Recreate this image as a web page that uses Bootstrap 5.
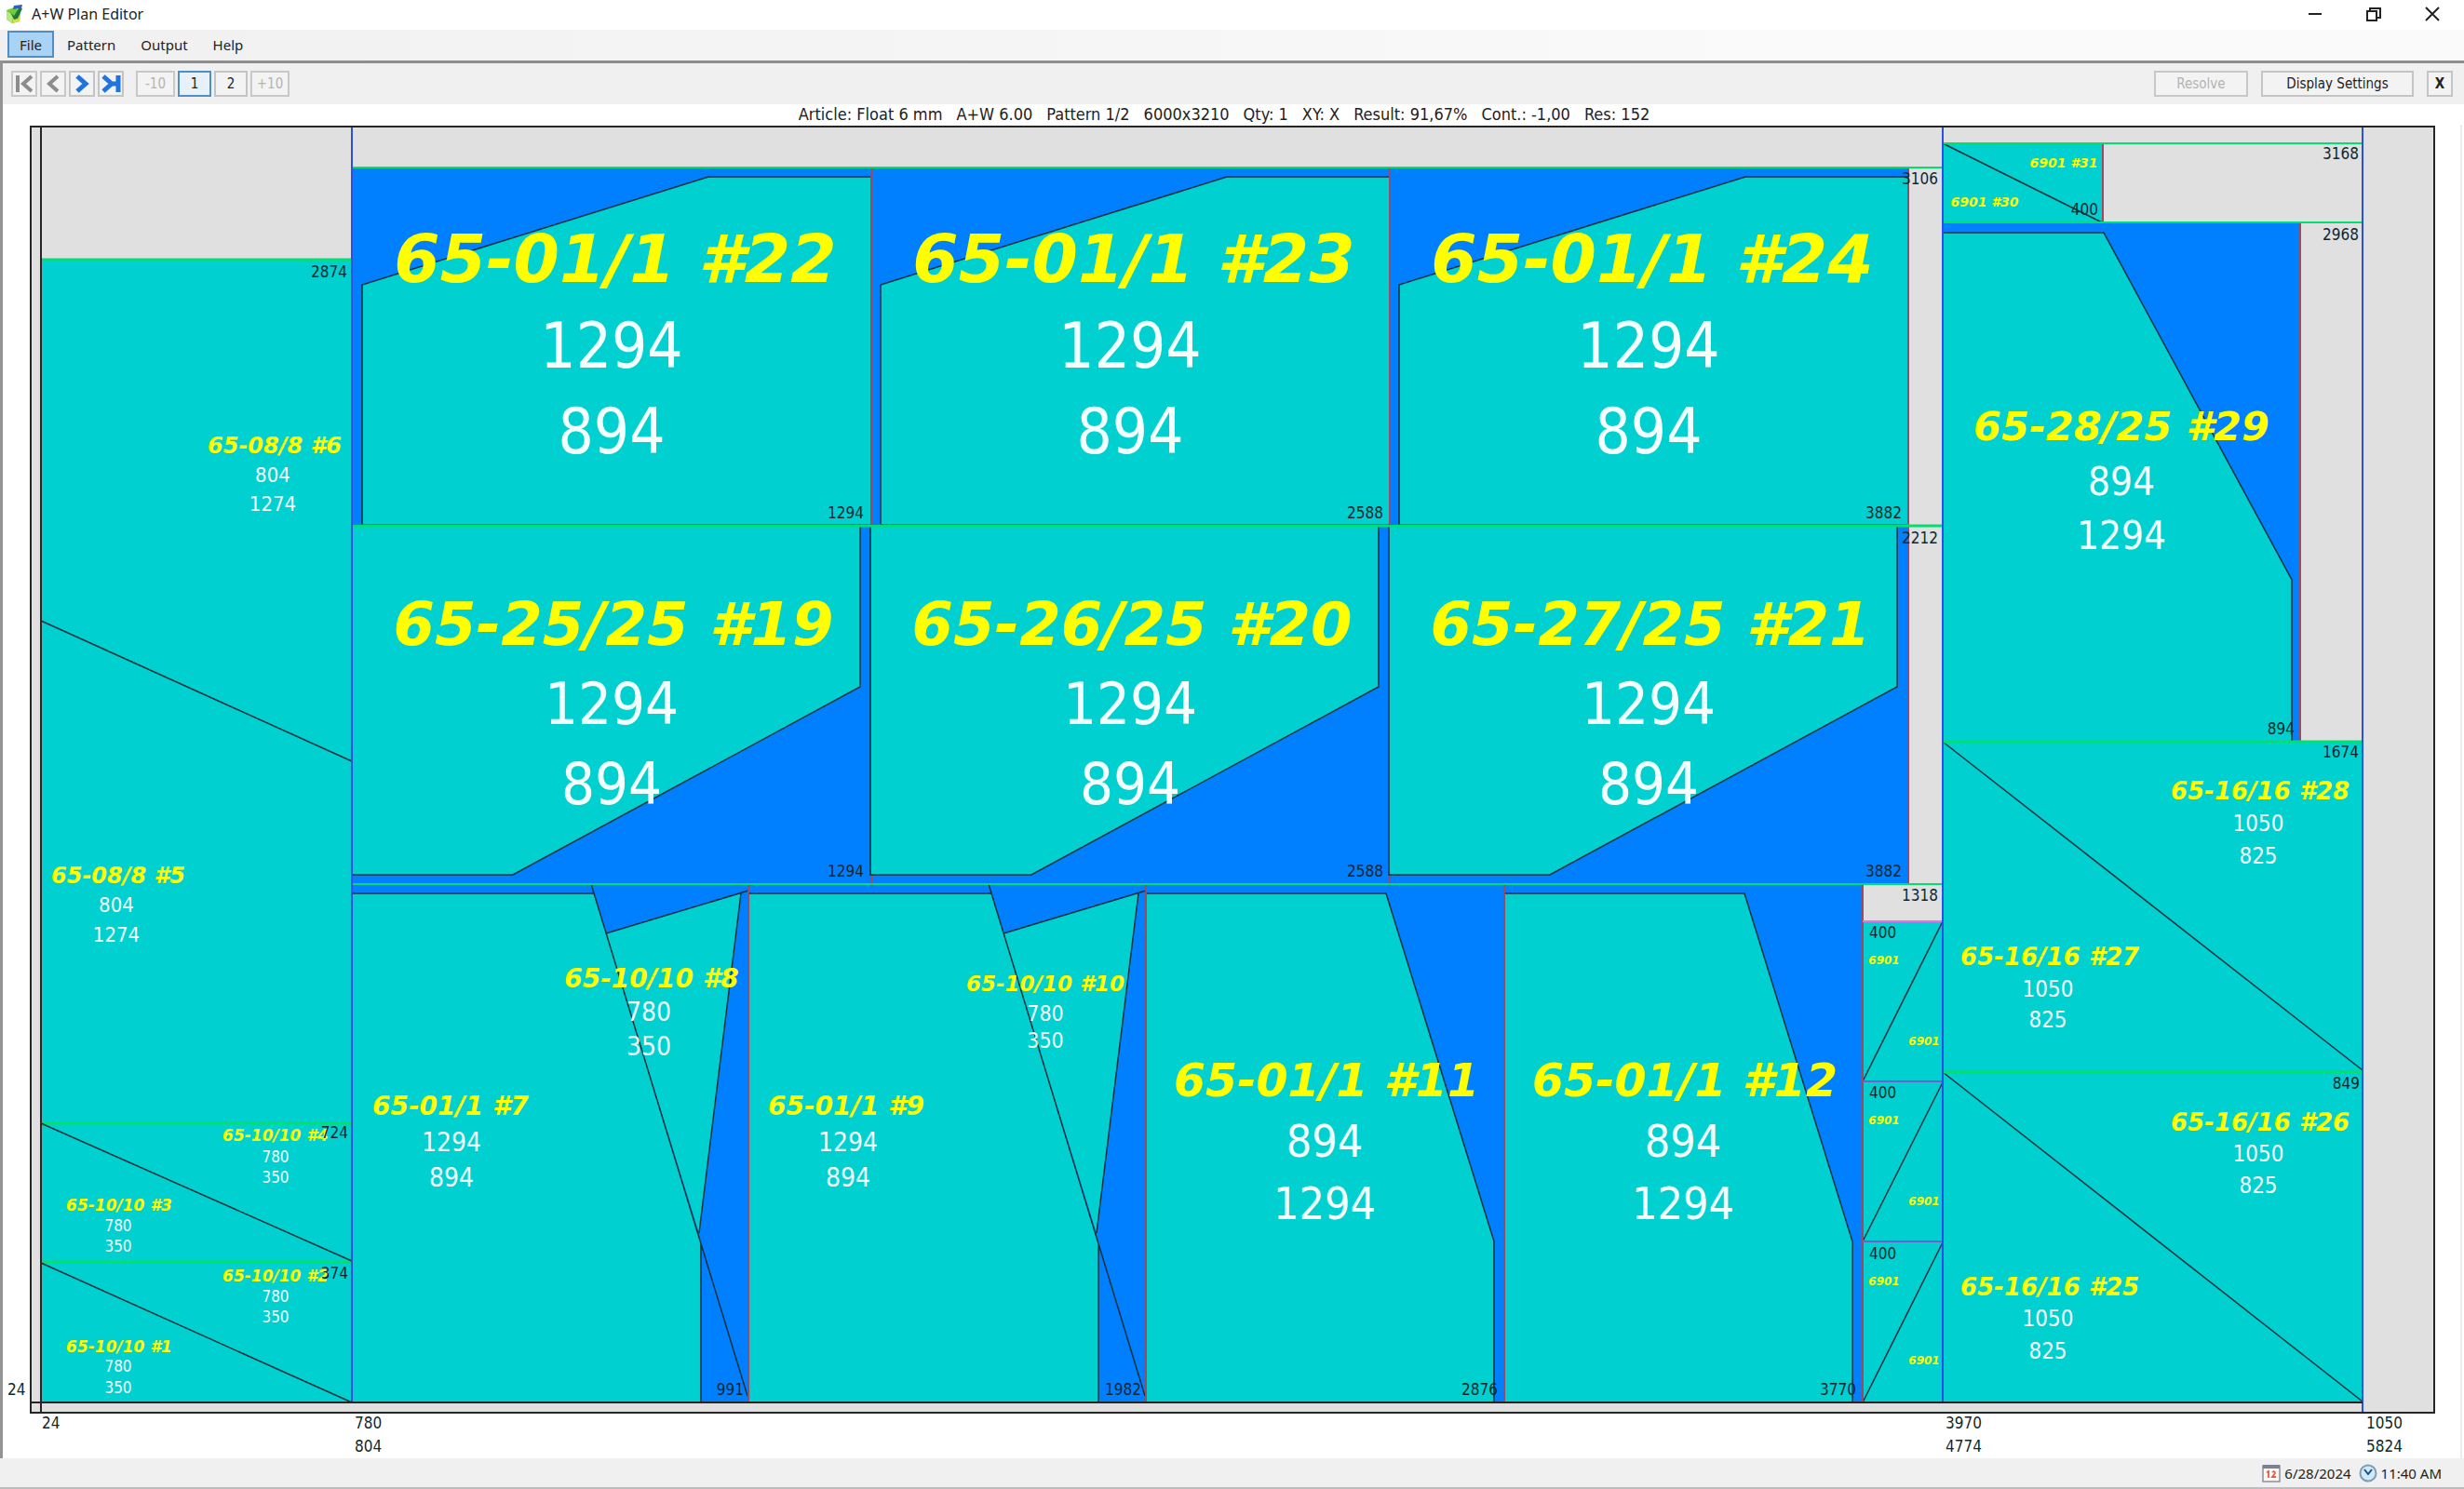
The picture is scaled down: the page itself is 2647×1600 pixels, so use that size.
<!DOCTYPE html>
<html lang="en">
<head>
<meta charset="utf-8">
<meta name="viewport" content="width=device-width, initial-scale=1">
<title>A+W Plan Editor</title>
<link href="https://cdn.jsdelivr.net/npm/bootstrap@5.3.0/dist/css/bootstrap.min.css" rel="stylesheet">
<style>
  body { font-family: "Noto Sans", "Open Sans", sans-serif; font-size: 16px; line-height: 20px; color: #222; background: #f0f0f0; }
  .title-bar { height: 32px; background: #fff; padding: 0 24px 2px 6px; }
  .win-btns { gap: 43px; }
  .win-btn { width: 20px; height: 20px; }
  .menu-bar { height: 33px; padding: 1px 8px; gap: 1px; font-size: 15px; background: linear-gradient(90deg, #f0f0f0 0, #fafafa 2000px); }
  .menu-bar a { height: 29px; padding: 0 12px; border: 1px solid transparent; color: #222; text-decoration: none; }
  .menu-bar a.active { background: #a9d3f5; border-color: #4f8fc4; outline: 1px solid #4f8fc4; outline-offset: -2px; }
  .editor { border-top: 3px solid #8e8e8e; border-left: 3px solid #939393; background: #fff; }
  .tool-bar { height: 44px; padding: 0 12px 0 9px; background: #f0f0f0; font-family: "DejaVu Sans Condensed", "DejaVu Sans", sans-serif; font-size: 15px; }
  .tool-group { gap: 3px; }
  .act-group { gap: 14px; }
  .pager { margin-left: 13px; }
  .tool-btn { height: 28px; border: 2px solid #c4c4c4; background: #f3f3f3; color: #222; }
  .tool-btn:disabled { color: #b4b4b4; border-color: #c8c8c8; }
  .tool-btn.active { border-color: #4f8fc4; background: #e6f1fa; }
  .step { width: 28px; }
  .page-no { width: 36px; }
  .page-jump { width: 42px; }
  .act-resolve { width: 101px; }
  .act-display { width: 164px; }
  .plan-info { height: 22px; padding-right: 20px; gap: 15px; font-family: "DejaVu Sans Condensed", "DejaVu Sans", sans-serif; font-size: 18px; color: #222; }
  .plan { display: block; width: 100%; height: auto; font-family: "DejaVu Sans Condensed", "DejaVu Sans", sans-serif; font-size: 17px; }
  .sheet { fill: #e0e0e0; }
  .rest { fill: #0080ff; }
  .glass { fill: #00d0d0; }
  .edge { fill: none; stroke: #262626; stroke-width: 2; }
  .thin { fill: none; stroke: #10303a; stroke-width: 1.5; }
  .pane { fill: #00d0d0; stroke: #10303a; stroke-width: 1.5; }
  .cut-x { fill: none; stroke: #2a50e8; stroke-width: 2; }
  .cut-y { fill: none; stroke: #00e070; stroke-width: 3; }
  .cut-z { fill: none; stroke: #a04860; stroke-width: 2; }
  .cut-w { fill: none; stroke: #7060d0; stroke-width: 2; }
  .cut-top { stroke: #e070f0; }
  .fine { stroke-width: 2; }
  .pos { font-family: "DejaVu Sans", sans-serif; font-weight: bold; font-style: oblique; fill: #ff0; text-anchor: middle; }
  .dim { fill: #f4ffff; text-anchor: middle; }
  .mm { fill: #10282c; }
  .end { text-anchor: end; }
  .s12 { font-size: 12px; } .s14 { font-size: 14px; } .s17 { font-size: 17px; }
  .s22 { font-size: 22px; } .s23 { font-size: 23px; } .s24 { font-size: 24px; } .s26 { font-size: 26px; }
  .s28 { font-size: 28px; } .s42 { font-size: 42px; } .s43 { font-size: 43px; } .s48 { font-size: 48px; }
  .s49 { font-size: 49px; } .s63 { font-size: 63px; } .s64 { font-size: 64px; } .s67 { font-size: 67px; } .s71 { font-size: 71px; }
  .status { height: 33px; padding: 0 24px 0 0; border-bottom: 2px solid #bdbdbd; background: #f0f0f0; font-size: 15px; }
</style>
</head>
<body>
<header class="title-bar d-flex align-items-center">
  <svg width="20" height="22" viewBox="0 0 20 22" aria-hidden="true">
    <path d="M1 7l8-3 7 4-1 11-8 2-6-4z" fill="#6fce3a"/>
    <path d="M1 8l6 3v10l-6-4z" fill="#b4ea7c"/>
    <path d="M7 14l9-2-1 7-7 2z" fill="#d3e04a"/>
    <path d="M9 2l9-1-1 4-9 1z" fill="#2f62b8"/>
    <path d="M5 9l4 4 5-8 4 0-5 11-4 1z" fill="#1f7a3a"/>
  </svg>
  <span class="ms-2 me-auto">A+W Plan Editor</span>
  <div class="win-btns d-flex">
    <button class="win-btn btn p-0 border-0 d-flex" aria-label="Minimize"><svg width="20" height="20"><path d="M3 10h14" stroke="#222" stroke-width="2"/></svg></button>
    <button class="win-btn btn p-0 border-0 d-flex" aria-label="Restore"><svg width="20" height="20"><path d="M3 7h10v10H3zM6 7V4h11v10h-4" fill="none" stroke="#222" stroke-width="2"/></svg></button>
    <button class="win-btn btn p-0 border-0 d-flex" aria-label="Close"><svg width="20" height="20"><path d="M3 3l14 14M17 3L3 17" stroke="#222" stroke-width="2"/></svg></button>
  </div>
</header>
<nav class="menu-bar d-flex">
  <a href="#" class="active d-flex align-items-center">File</a>
  <a href="#" class="d-flex align-items-center">Pattern</a>
  <a href="#" class="d-flex align-items-center">Output</a>
  <a href="#" class="d-flex align-items-center">Help</a>
</nav>
<main class="editor">
  <div class="tool-bar d-flex align-items-center">
    <div class="tool-group d-flex">
      <button class="tool-btn step p-0 d-flex justify-content-center align-items-center" disabled aria-label="First pattern"><svg width="22" height="22" viewBox="0 0 22 22"><path d="M4 2v18M19 3l-9 8 9 8" fill="none" stroke="#8c8c8c" stroke-width="4"/></svg></button>
      <button class="tool-btn step p-0 d-flex justify-content-center align-items-center" disabled aria-label="Previous pattern"><svg width="22" height="22" viewBox="0 0 22 22"><path d="M16 3l-9 8 9 8" fill="none" stroke="#8c8c8c" stroke-width="4"/></svg></button>
      <button class="tool-btn step p-0 d-flex justify-content-center align-items-center" aria-label="Next pattern"><svg width="22" height="22" viewBox="0 0 22 22"><path d="M6 3l9 8-9 8" fill="none" stroke="#1f74e0" stroke-width="5"/></svg></button>
      <button class="tool-btn step p-0 d-flex justify-content-center align-items-center" aria-label="Last pattern"><svg width="22" height="22" viewBox="0 0 22 22"><path d="M3 3l9 8-9 8M19 2v18M18 11h-6" fill="none" stroke="#1f74e0" stroke-width="5"/></svg></button>
    </div>
    <div class="tool-group pager d-flex me-auto">
      <button class="tool-btn page-jump p-0" disabled>-10</button>
      <button class="tool-btn page-no p-0 active">1</button>
      <button class="tool-btn page-no p-0">2</button>
      <button class="tool-btn page-jump p-0" disabled>+10</button>
    </div>
    <div class="act-group d-flex">
      <button class="tool-btn act-resolve p-0" disabled>Resolve</button>
      <button class="tool-btn act-display p-0">Display Settings</button>
      <button class="tool-btn step p-0 fw-bold">X</button>
    </div>
  </div>
  <div class="plan-info d-flex justify-content-center align-items-center">
    <span>Article: Float 6 mm</span><span>A+W 6.00</span><span>Pattern 1/2</span><span>6000x3210</span><span>Qty: 1</span><span>XY: X</span><span>Result: 91,67%</span><span>Cont.: -1,00</span><span>Res: 152</span>
  </div>
  <svg class="plan" viewBox="3 134 2644 1433" role="img" aria-label="Cutting plan">
    <defs>
      <g id="upper">
        <path class="pane" d="M389 564V306L761 190H936V564z"/>
        <path class="cut-z" d="M936 180V564"/>
      </g>
      <g id="middle">
        <path class="pane" d="M378 564H924V738L551 940H378z"/>
        <path class="cut-z" d="M936 564V950"/>
      </g>
      <g id="lowpair">
        <path class="glass" d="M378 960H638L753 1337V1507H378zM651 1003L796 960L751 1325z"/>
        <path class="thin" d="M378 960H638M753 1337V1507M796 960L751 1325M635 950L803 1500M651 1003L804 957"/>
        <path class="cut-z" d="M804 950V1507"/>
      </g>
      <g id="lowshape">
        <path class="pane" d="M1231 960H1489L1605 1334V1507H1231z"/>
        <path class="cut-z" d="M1231 950V1507M1616 950V1507"/>
      </g>
    </defs>
    <path d="M2644 134v1433" stroke="#ececec" stroke-width="2"/>
    <path class="sheet" d="M33 136H2615V1518H33z"/>

    <!-- strip 1 -->
    <path class="glass" d="M44 279H378V1507H44z"/>
    <path class="cut-y" d="M44 279H378M44 1207H378M44 1356H378"/>
    <path class="thin" d="M44 667L378 818M44 1207L378 1355M44 1357L378 1507"/>

    <!-- strip 2 -->
    <path class="rest" d="M378 180H2049V950H2001V1507H378z"/>
    <use href="#upper"/><use href="#upper" x="557"/><use href="#upper" x="1114"/>
    <use href="#middle"/><use href="#middle" x="557"/><use href="#middle" x="1114"/>
    <use href="#lowpair"/><use href="#lowpair" x="427"/>
    <use href="#lowshape"/><use href="#lowshape" x="385"/>
    <path class="glass" d="M2001 990H2087V1507H2001z"/>
    <path class="thin" d="M2001 1162L2087 990M2001 1334L2087 1163M2001 1507L2087 1335"/>
    <path class="cut-z" d="M2001 950V1507"/>
    <path class="cut-w" d="M2001 1162H2087M2001 1334H2087"/>
    <path class="cut-w cut-top" d="M2001 990H2087"/>
    <path class="cut-y" d="M378 565H2087"/>
    <path class="cut-y fine" d="M378 180H2087M378 950H2087"/>

    <!-- strip 3 -->
    <path class="glass" d="M2087 154H2259V239H2087zM2087 797H2538V1507H2087z"/>
    <path class="rest" d="M2087 239H2471V797H2087z"/>
    <path class="pane" d="M2087 250H2260L2462 623V797H2087z"/>
    <path class="thin" d="M2087 154L2258 239M2087 797L2538 1150M2087 1152L2538 1506"/>
    <path class="cut-z" d="M2259 154V239M2471 239V797"/>
    <path class="cut-y" d="M2087 797H2538M2087 1152H2538"/>
    <path class="cut-y fine" d="M2087 154H2538M2087 239H2538"/>

    <path class="cut-x" d="M378 136V1507M2087 136V1507M2538 136V1518"/>
    <path class="edge" d="M33 136H2615V1518H33zM44 136V1518M33 1507H2538"/>

    <!-- piece numbers -->
    <g class="pos s17"><text x="128" y="1453">65-10/10 #1</text><text x="296" y="1377">65-10/10 #2</text><text x="128" y="1301">65-10/10 #3</text><text x="296" y="1226">65-10/10 #4</text></g>
    <g class="pos s24"><text x="127" y="949">65-08/8 #5</text><text x="295" y="487">65-08/8 #6</text></g>
    <g class="pos s23"><text x="1123" y="1065">65-10/10 #10</text></g>
    <g class="pos s28"><text x="484" y="1198">65-01/1 #7</text><text x="909" y="1198">65-01/1 #9</text><text x="700" y="1061">65-10/10 #8</text></g>
    <g class="pos s49"><text x="1425" y="1178">65-01/1 #11</text><text x="1810" y="1178">65-01/1 #12</text></g>
    <g class="pos s64"><text x="659" y="693">65-25/25 #19</text><text x="1216" y="693">65-26/25 #20</text><text x="1773" y="693">65-27/25 #21</text></g>
    <g class="pos s71"><text x="661" y="303">65-01/1 #22</text><text x="1218" y="303">65-01/1 #23</text><text x="1775" y="303">65-01/1 #24</text></g>
    <g class="pos s26"><text x="2202" y="1392">65-16/16 #25</text><text x="2428" y="1215">65-16/16 #26</text><text x="2202" y="1037">65-16/16 #27</text><text x="2428" y="859">65-16/16 #28</text></g>
    <g class="pos s43"><text x="2279" y="473">65-28/25 #29</text></g>
    <g class="pos s14"><text x="2132" y="222">6901 #30</text><text x="2217" y="180">6901 #31</text></g>
    <g class="pos s12"><text x="2024" y="1036">6901</text><text x="2067" y="1123">6901</text><text x="2024" y="1208">6901</text><text x="2067" y="1295">6901</text><text x="2024" y="1381">6901</text><text x="2067" y="1466">6901</text></g>

    <!-- piece sizes -->
    <g class="dim s17">
      <text x="127" y="1474">780</text><text x="127" y="1497">350</text><text x="296" y="1399">780</text><text x="296" y="1421">350</text>
      <text x="127" y="1323">780</text><text x="127" y="1345">350</text><text x="296" y="1249">780</text><text x="296" y="1271">350</text>
    </g>
    <g class="dim s22"><text x="125" y="980">804</text><text x="125" y="1012">1274</text><text x="293" y="518">804</text><text x="293" y="549">1274</text></g>
    <g class="dim s23"><text x="1123" y="1097">780</text><text x="1123" y="1126">350</text></g>
    <g class="dim s28">
      <text x="485" y="1237">1294</text><text x="485" y="1275">894</text><text x="911" y="1237">1294</text><text x="911" y="1275">894</text>
      <text x="697" y="1097">780</text><text x="697" y="1134">350</text>
    </g>
    <g class="dim s48"><text x="1423" y="1243">894</text><text x="1423" y="1310">1294</text><text x="1808" y="1243">894</text><text x="1808" y="1310">1294</text></g>
    <g class="dim s63"><text x="657" y="778">1294</text><text x="657" y="864">894</text><text x="1214" y="778">1294</text><text x="1214" y="864">894</text><text x="1771" y="778">1294</text><text x="1771" y="864">894</text></g>
    <g class="dim s67"><text x="657" y="395">1294</text><text x="657" y="487">894</text><text x="1214" y="395">1294</text><text x="1214" y="487">894</text><text x="1771" y="395">1294</text><text x="1771" y="487">894</text></g>
    <g class="dim s42"><text x="2279" y="532">894</text><text x="2279" y="590">1294</text></g>
    <g class="dim s24">
      <text x="2200" y="1425">1050</text><text x="2200" y="1460">825</text><text x="2426" y="1248">1050</text><text x="2426" y="1282">825</text>
      <text x="2200" y="1071">1050</text><text x="2200" y="1104">825</text><text x="2426" y="893">1050</text><text x="2426" y="928">825</text>
    </g>

    <!-- cut positions -->
    <g class="mm end">
      <text x="373" y="298">2874</text><text x="374" y="1223">724</text><text x="374" y="1374">374</text>
      <text x="928" y="557">1294</text><text x="1486" y="557">2588</text><text x="2043" y="557">3882</text>
      <text x="928" y="942">1294</text><text x="1486" y="942">2588</text><text x="2043" y="942">3882</text>
      <text x="799" y="1499">991</text><text x="1226" y="1499">1982</text><text x="1609" y="1499">2876</text><text x="1994" y="1499">3770</text>
      <text x="2082" y="198">3106</text><text x="2082" y="584">2212</text><text x="2082" y="968">1318</text>
      <text x="2254" y="231">400</text><text x="2534" y="171">3168</text><text x="2534" y="258">2968</text>
      <text x="2465" y="789">894</text><text x="2534" y="814">1674</text><text x="2535" y="1170">849</text>
    </g>
    <g class="mm">
      <text x="2008" y="1008">400</text><text x="2008" y="1180">400</text><text x="2008" y="1353">400</text>
      <text x="8" y="1499">24</text><text x="45" y="1535">24</text>
      <text x="381" y="1535">780</text><text x="381" y="1560">804</text>
      <text x="2090" y="1535">3970</text><text x="2090" y="1560">4774</text>
      <text x="2542" y="1535">1050</text><text x="2542" y="1560">5824</text>
    </g>
  </svg>
</main>
<footer class="status d-flex justify-content-end align-items-center gap-1">
  <svg width="20" height="20" viewBox="0 0 20 20" aria-hidden="true"><path d="M1 2h18v17H1z" fill="#fdf6f6" stroke="#8a8f9c" stroke-width="1.500"/><path d="M1 1h18v4H1z" fill="#7d7f92"/><path d="M5 9l2-1v7M11 9q3-2 3 1l-3 4h4" fill="none" stroke="#e0603c" stroke-width="1.800"/></svg>
  <span>6/28/2024</span>
  <svg class="ms-1" width="20" height="20" viewBox="0 0 20 20" aria-hidden="true"><circle cx="10" cy="10" r="8.500" fill="#cfeafa" stroke="#7f9db5" stroke-width="2"/><path d="M6 6l4 5 4-5" fill="none" stroke="#1f4f80" stroke-width="2"/></svg>
  <span>11:40 AM</span>
</footer>
<script src="https://cdn.jsdelivr.net/npm/bootstrap@5.3.0/dist/js/bootstrap.bundle.min.js"></script>
</body>
</html>
